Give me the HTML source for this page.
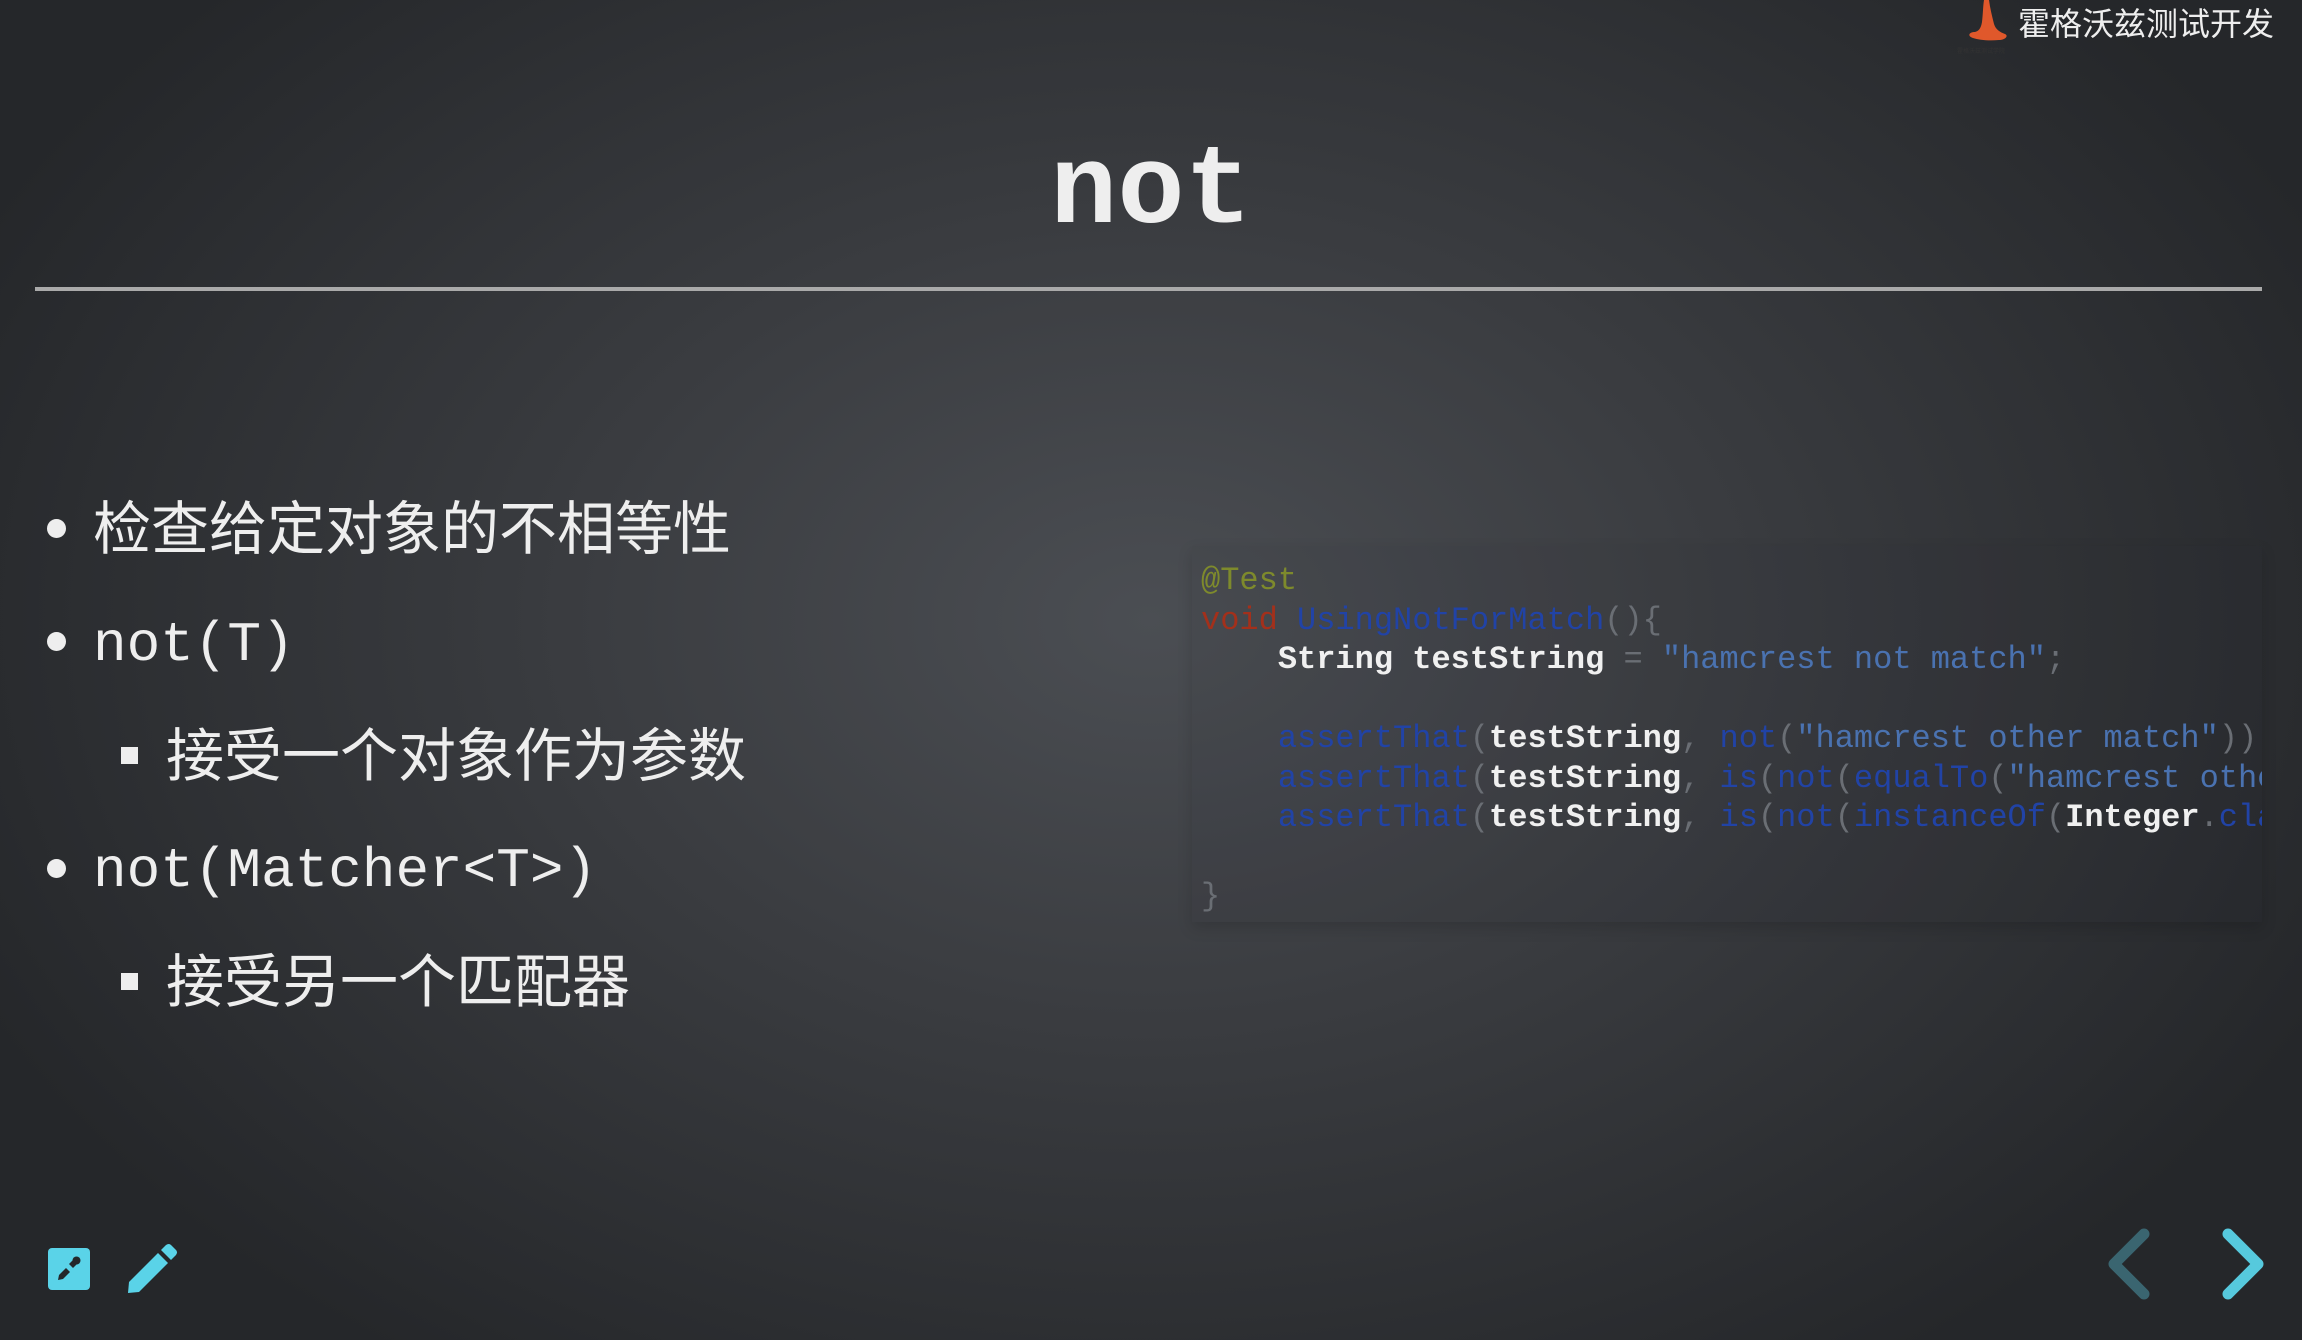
<!DOCTYPE html>
<html><head><meta charset="utf-8"><style>
html,body{margin:0;padding:0}
body{width:2302px;height:1340px;overflow:hidden;position:relative;
background:radial-gradient(ellipse 1300px 900px at 1150px 620px,#4b4e53 0%,#3a3c40 45%,#25272a 100%);
font-family:"Liberation Sans","Noto Sans CJK SC",sans-serif;color:#eee}
.title{position:absolute;left:0;width:2302px;top:128px;text-align:center;font-family:"Liberation Mono",monospace;font-weight:bold;font-size:112px;line-height:130px;color:#eee}
.hr{position:absolute;left:35px;width:2227px;top:287px;height:4px;background:#aaa}
.b{position:absolute;white-space:nowrap;line-height:80px;height:80px}
.cj{font-family:"Liberation Sans","Noto Sans CJK SC",sans-serif;font-size:58px}
.mo{font-family:"Liberation Mono",monospace;font-size:56px}
.dot{position:absolute;width:19px;height:19px;border-radius:50%;background:#eee}
.sq{position:absolute;width:17px;height:17px;background:#eee}
.code{position:absolute;left:1192px;top:546px;width:1070px;height:376px;background:rgba(40,42,46,0.08);box-shadow:0 6px 14px rgba(0,0,0,0.15);overflow:hidden}
.code pre{margin:0;position:absolute;left:9px;top:15px;font-family:"Liberation Mono",monospace;font-size:32px;line-height:39.5px;color:#f0f0f0;white-space:pre;font-weight:bold}
.an{color:#7e8a2c;font-weight:normal}.kw{color:#a3301b;font-weight:normal}.fn{color:#2143a6;font-weight:normal}.st{color:#4a72b0;font-weight:normal}.p{color:#6a6e74;font-weight:normal}
.logo{position:absolute;left:2018px;top:4px;font-size:32px;line-height:40px;color:#eee}
</style></head><body>
<svg style="position:absolute;left:1955px;top:0" width="62" height="56" viewBox="0 0 62 56">
<path d="M29 0 L34 0 C35 8 37 16 39 24 C41 30 45 32 50 34 C54 36 50 40 44 40 C34 41 24 40 18 38 C12 36 14 32 20 32 C24 31 26 28 27 22 C28 14 28 6 29 0 Z" fill="#e0582b"/>
<text x="2" y="53" font-size="6" fill="#333" font-family="Noto Sans CJK SC">霍格沃兹测试学院</text>
</svg>
<div class="logo">霍格沃兹测试开发</div>
<div class="title">not</div>
<div class="hr"></div>

<div class="dot" style="left:47px;top:519px"></div>
<div class="b cj" style="left:93px;top:490px">检查给定对象的不相等性</div>
<div class="dot" style="left:47px;top:632px"></div>
<div class="b mo" style="left:93px;top:605px">not(T)</div>
<div class="sq" style="left:121px;top:747px"></div>
<div class="b cj" style="left:166px;top:717px">接受一个对象作为参数</div>
<div class="dot" style="left:47px;top:859px"></div>
<div class="b mo" style="left:93px;top:831px">not(Matcher&lt;T&gt;)</div>
<div class="sq" style="left:121px;top:973px"></div>
<div class="b cj" style="left:166px;top:943px">接受另一个匹配器</div>

<div class="code"><pre><span class="an">@Test</span>
<span class="kw">void</span> <span class="fn">UsingNotForMatch</span><span class="p">(){</span>
    String testString <span class="p">=</span> <span class="st">"hamcrest not match"</span><span class="p">;</span>

    <span class="fn">assertThat</span><span class="p">(</span>testString<span class="p">,</span> <span class="fn">not</span><span class="p">(</span><span class="st">"hamcrest other match"</span><span class="p">));</span>
    <span class="fn">assertThat</span><span class="p">(</span>testString<span class="p">,</span> <span class="fn">is</span><span class="p">(</span><span class="fn">not</span><span class="p">(</span><span class="fn">equalTo</span><span class="p">(</span><span class="st">"hamcrest other match"</span><span class="p">)));</span>
    <span class="fn">assertThat</span><span class="p">(</span>testString<span class="p">,</span> <span class="fn">is</span><span class="p">(</span><span class="fn">not</span><span class="p">(</span><span class="fn">instanceOf</span><span class="p">(</span>Integer<span class="p">.</span><span class="fn">class</span><span class="p">))));</span>

<span class="p">}</span></pre></div>

<svg style="position:absolute;left:48px;top:1248px" width="42" height="42" viewBox="0 0 42 42">
<rect x="0" y="0" width="42" height="42" rx="4" fill="#5ad3e8"/>
<path d="M22 20 L15 27 L10 28 L11 23 L18 16 Z" fill="#24272a" transform="translate(0,4)"/>
<circle cx="28.5" cy="12.5" r="4" fill="#24272a"/>
<path d="M21 16 L25 12 L29 16 L25 20 Z" fill="#24272a"/>
</svg>
<svg style="position:absolute;left:126px;top:1242px" width="54" height="54" viewBox="0 0 54 54">
<path d="M3 40 L32 11 L42 21 L13 50 L2 51 Z" fill="#5ad3e8"/>
<path d="M35 8 L40 3 Q43 1 45 3 L50 8 Q52 10 50 13 L45 18 Z" fill="#5ad3e8"/>
</svg>

<svg style="position:absolute;left:2100px;top:1222px" width="70" height="90" viewBox="0 0 70 90">
<path d="M44 12 L14 42 L44 72" fill="none" stroke="#3a6570" stroke-width="11" stroke-linecap="round" stroke-linejoin="round"/>
</svg>
<svg style="position:absolute;left:2210px;top:1222px" width="70" height="90" viewBox="0 0 70 90">
<path d="M18 12 L48 42 L18 72" fill="none" stroke="#56c9dd" stroke-width="11" stroke-linecap="round" stroke-linejoin="round"/>
</svg>
</body></html>
